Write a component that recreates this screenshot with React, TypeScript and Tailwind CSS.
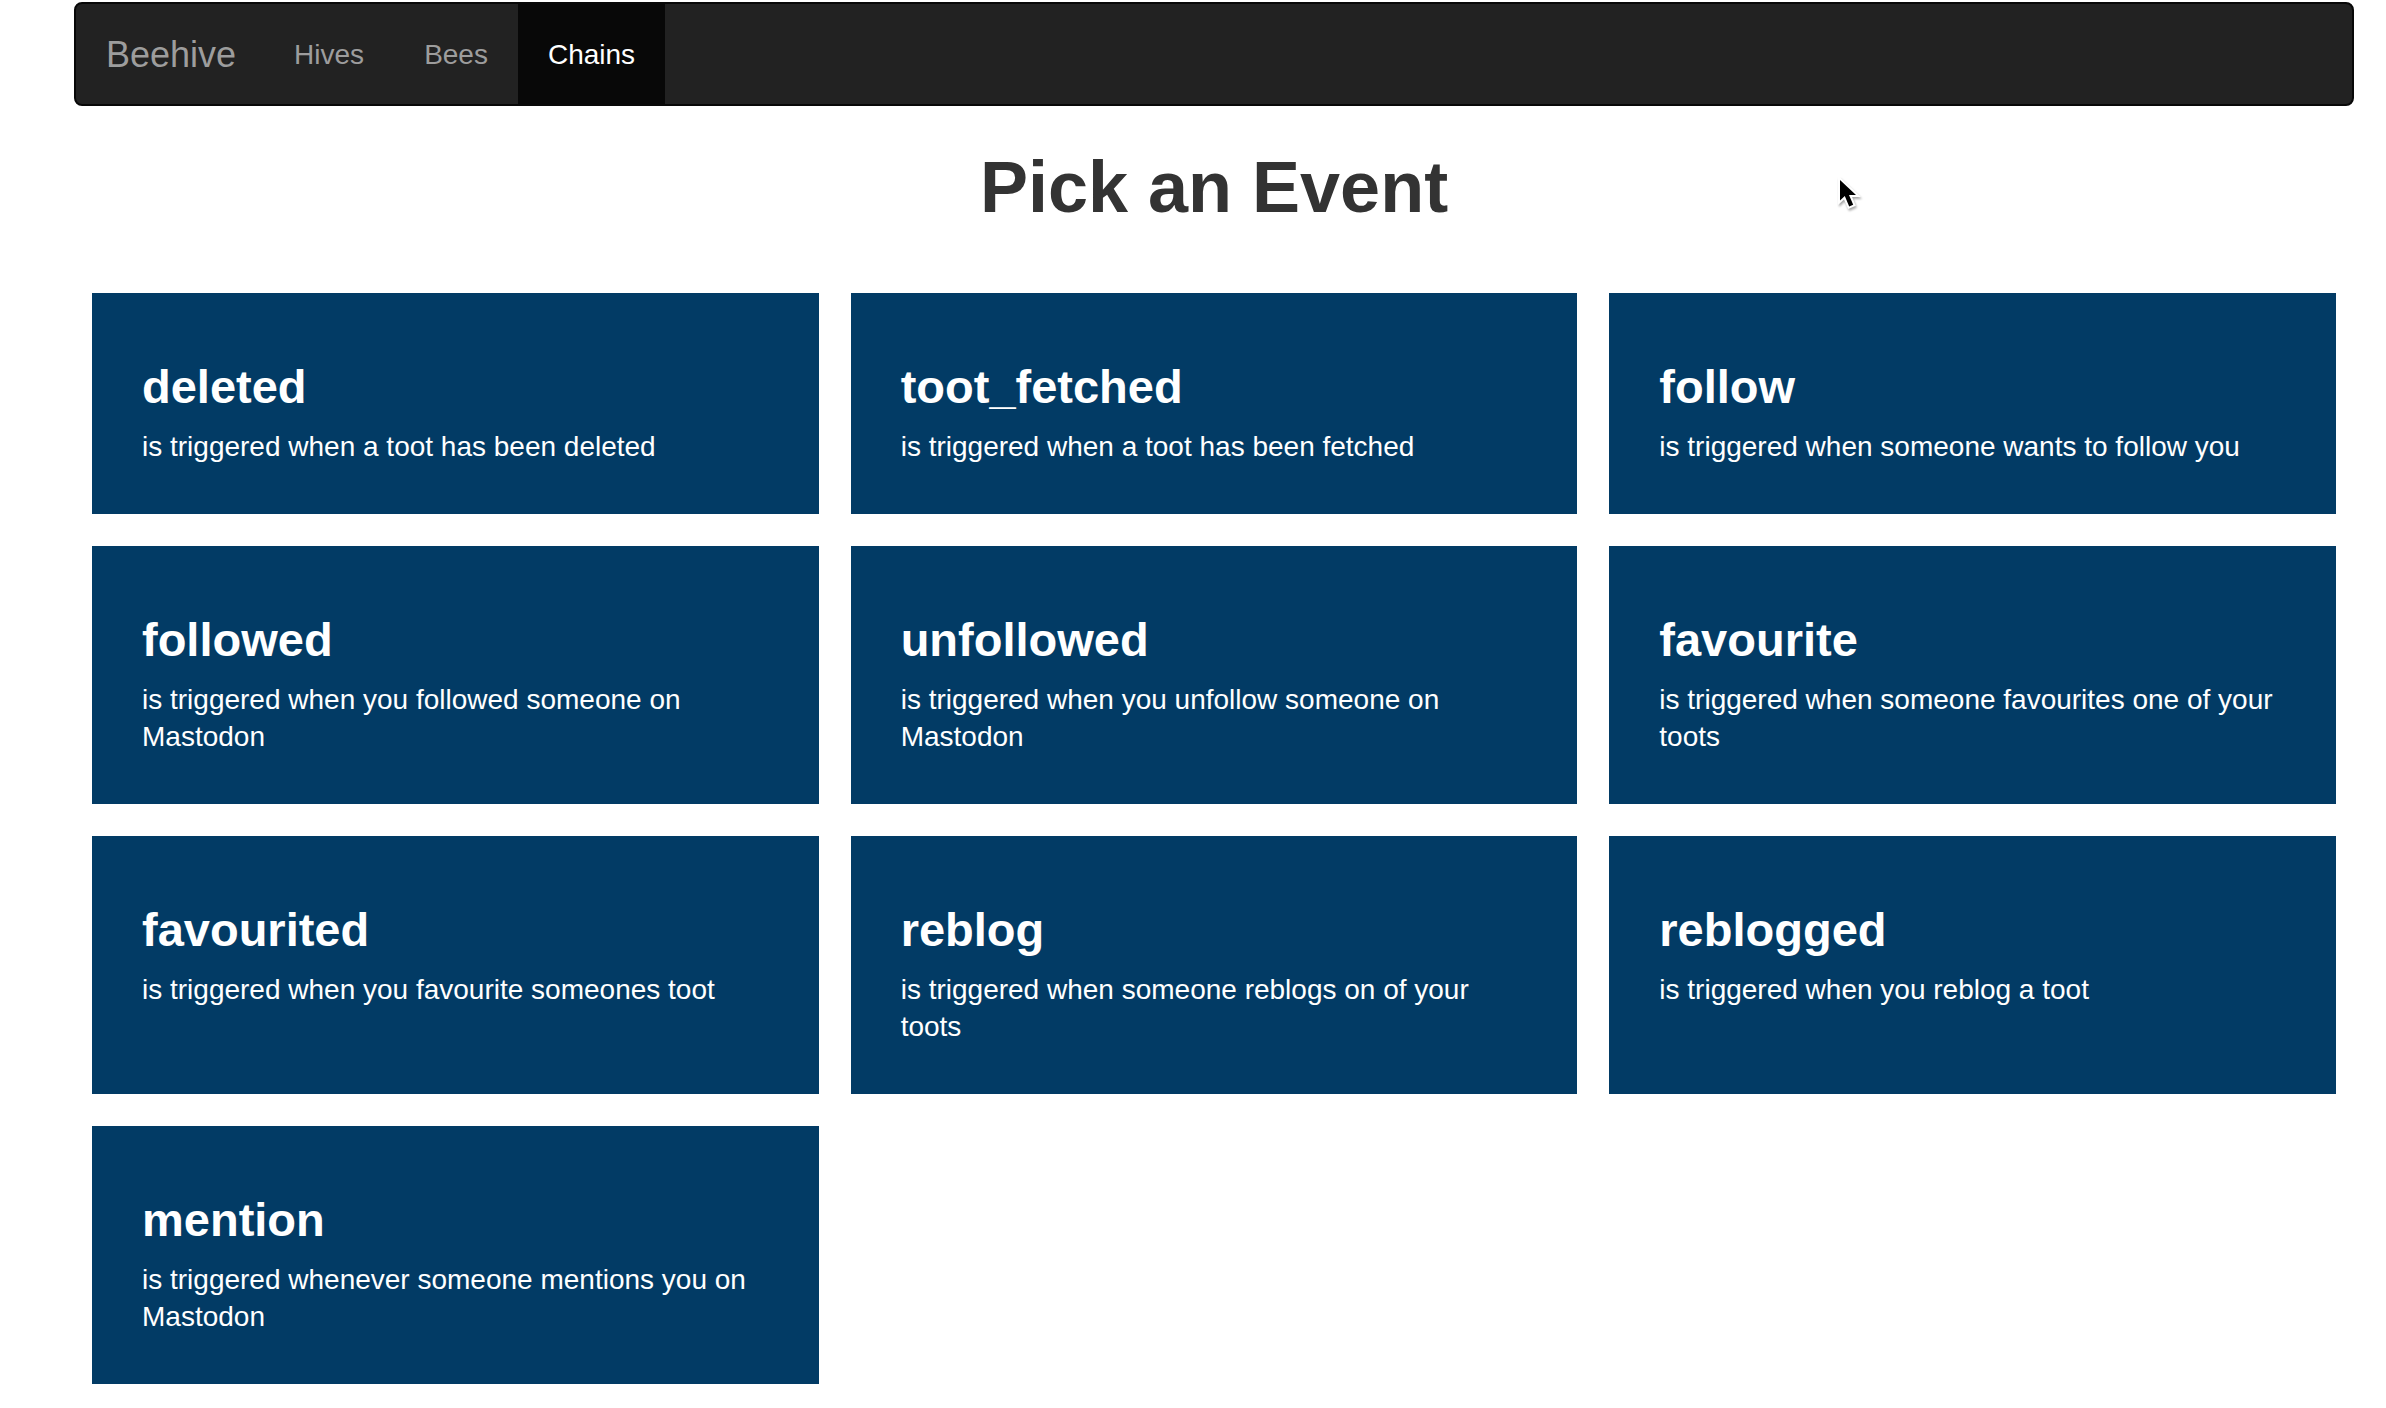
type EventInfo = { name: string; description: string };

const navItems = [
  { label: "Hives", active: false },
  { label: "Bees", active: false },
  { label: "Chains", active: true },
];

const events: EventInfo[] = [
  { name: "deleted", description: "is triggered when a toot has been deleted" },
  { name: "toot_fetched", description: "is triggered when a toot has been fetched" },
  { name: "follow", description: "is triggered when someone wants to follow you" },
  { name: "followed", description: "is triggered when you followed someone on Mastodon" },
  { name: "unfollowed", description: "is triggered when you unfollow someone on Mastodon" },
  { name: "favourite", description: "is triggered when someone favourites one of your toots" },
  { name: "favourited", description: "is triggered when you favourite someones toot" },
  { name: "reblog", description: "is triggered when someone reblogs on of your toots" },
  { name: "reblogged", description: "is triggered when you reblog a toot" },
  { name: "mention", description: "is triggered whenever someone mentions you on Mastodon" },
];

function Navbar() {
  return (
    <nav className="flex overflow-hidden rounded-lg border-2 border-[#080808] bg-[#222222] text-[#9d9d9d]">
      <a href="#" className="pt-[31px] pr-7 pb-[29px] pl-[30px] text-[36px] leading-10">
        Beehive
      </a>
      <ul className="flex text-[28px] leading-10">
        {navItems.map((item) => (
          <li key={item.label}>
            <a
              href="#"
              aria-current={item.active ? "page" : undefined}
              className={
                item.active
                  ? "block bg-[#080808] px-[30px] pt-[31px] pb-[29px] text-white"
                  : "block px-[30px] pt-[31px] pb-[29px]"
              }
            >
              {item.label}
            </a>
          </li>
        ))}
      </ul>
    </nav>
  );
}

function EventCard({ name, description }: EventInfo) {
  return (
    <a href="#" className="block bg-[#023b65] px-[50px] pt-[68px] pb-[49px] text-white">
      <h3 className="mb-[15px] text-[47px] leading-[52px] font-bold">{name}</h3>
      <p className="text-[28px] leading-[37px]">{description}</p>
    </a>
  );
}

function Pointer() {
  return (
    <svg
      aria-hidden="true"
      viewBox="0 0 24 38"
      className="pointer-events-none absolute top-[177px] left-[1837px] h-[38px] w-6 drop-shadow-[1px_2px_1px_rgba(0,0,0,0.35)]"
    >
      <path
        d="M3 3v20.5l4.8-4.4 4.4 10.4 4-1.7-4.2-9.8h7z"
        fill="#000"
        stroke="#fff"
        strokeWidth="4"
        paintOrder="stroke"
      />
    </svg>
  );
}

export default function App() {
  return (
    <div className="relative min-h-screen bg-white pt-0.5 pr-8 pb-6 pl-[74px] font-['Liberation_Sans',Arial,sans-serif]">
      <Navbar />
      <main className="px-[18px]">
        <h1 className="mt-[41px] mb-[66px] text-center text-[72px] leading-[80px] font-bold text-[#333333]">
          Pick an Event
        </h1>
        <div className="grid grid-cols-3 gap-8">
          {events.map((event) => (
            <EventCard key={event.name} {...event} />
          ))}
        </div>
      </main>
      <Pointer />
    </div>
  );
}
